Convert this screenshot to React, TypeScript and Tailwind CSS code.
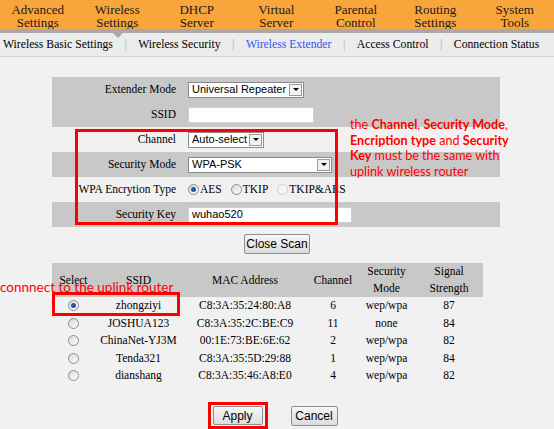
import React from "react";

const serif = "font-['Liberation_Serif','Times_New_Roman',serif]";
const sans = "font-['Liberation_Sans',Arial,sans-serif]";

function Arrow() {
  return (
    <div className="w-[13px] h-[12px] mr-[1px] border border-[#9a9a9a] bg-[#f2f2f2] flex items-center justify-center">
      <div className="w-0 h-0 border-l-[3px] border-r-[3px] border-t-[3px] border-l-transparent border-r-transparent border-t-black" />
    </div>
  );
}

function Select({ w, text }: { w: string; text: string }) {
  return (
    <div className={`${w} h-[16px] bg-white border border-[#8a8a8a] flex items-center justify-between`}>
      <span className={`${sans} text-[11px] pl-[3px] leading-none text-black whitespace-nowrap`}>{text}</span>
      <Arrow />
    </div>
  );
}

function Radio({ checked, faded }: { checked?: boolean; faded?: boolean }) {
  return (
    <span
      className={`inline-flex items-center justify-center w-[11px] h-[11px] rounded-full border ${
        faded ? "border-[#cfcfcf] bg-[#f4f4f4]" : "border-[#8c8c8c] bg-gradient-to-br from-[#d8d8d8] to-[#ffffff]"
      }`}
    >
      {checked && <span className="w-[5px] h-[5px] rounded-full bg-[#2457a8]" />}
    </span>
  );
}

function Row({ gray, label, children }: { gray?: boolean; label: string; children: React.ReactNode }) {
  return (
    <div className={`flex items-center h-[25px] ${gray ? "bg-[#c8c8c8]" : ""}`}>
      <div className={`w-[124px] text-right whitespace-nowrap ${serif} text-[11.5px] text-black`}>{label}</div>
      <div className="pl-[12px] flex items-center">{children}</div>
    </div>
  );
}

const nav = [
  ["Advanced", "Settings"],
  ["Wireless", "Settings"],
  ["DHCP", "Server"],
  ["Virtual", "Server"],
  ["Parental", "Control"],
  ["Routing", "Settings"],
  ["System", "Tools"],
];

const sub = ["Wireless Basic Settings", "Wireless Security", "Wireless Extender", "Access Control", "Connection Status"];

const nets = [
  ["zhongziyi", "C8:3A:35:24:80:A8", "6", "wep/wpa", "87", true],
  ["JOSHUA123", "C8:3A:35:2C:BE:C9", "11", "none", "84", false],
  ["ChinaNet-YJ3M", "00:1E:73:BE:6E:62", "2", "wep/wpa", "82", false],
  ["Tenda321", "C8:3A:35:5D:29:88", "1", "wep/wpa", "84", false],
  ["dianshang", "C8:3A:35:46:A8:E0", "4", "wep/wpa", "82", false],
] as const;

const btn = `${sans} text-[12px] text-black bg-gradient-to-b from-[#f7f7f7] to-[#dcdcdc] border border-[#8e8e8e] rounded-[2px] flex items-center justify-center`;

export default function App() {
  return (
    <div className="relative w-[554px] h-[429px] overflow-hidden bg-[#f1f1f1]">
      {/* top nav */}
      <div className="flex h-[29px] bg-[#f8a53c] -ml-[2px]">
        {nav.map(([a, b]) => (
          <div key={a} className={`w-[79.5px] shrink-0 text-center ${serif} text-[13px] leading-[13px] pt-[3px] text-[#1a1a1a]`}>
            <div>{a}</div>
            <div>{b}</div>
          </div>
        ))}
      </div>
      <div className="relative h-[4px] bg-[#a9a9a9]">
        <div className="absolute left-[113px] top-[4px] w-0 h-0 border-l-[5px] border-r-[5px] border-t-[5px] border-l-transparent border-r-transparent border-t-[#a9a9a9]" />
      </div>
      {/* sub nav */}
      <div className={`flex items-center h-[24px] bg-[#ececec] border-b border-[#d4d4d4] pl-[3px] ${serif} text-[11.7px] text-black`}>
        {sub.map((s, i) => (
          <React.Fragment key={s}>
            {i > 0 && <span className="mx-[11.5px] text-[#b0b0b0]">|</span>}
            <span className={s === "Wireless Extender" ? "text-[#3357ee]" : ""}>{s}</span>
          </React.Fragment>
        ))}
      </div>

      {/* form */}
      <div className="ml-[52px] mt-[20px] w-[448px]">
        <Row gray label="Extender Mode">
          <Select w="w-[116px]" text="Universal Repeater" />
        </Row>
        <Row gray label="SSID">
          <div className="w-[126px] h-[16px] bg-white border border-[#d0d0d0]" />
        </Row>
        <Row label="Channel">
          <Select w="w-[76px]" text="Auto-select" />
        </Row>
        <Row gray label="Security Mode">
          <Select w="w-[144px]" text="WPA-PSK" />
        </Row>
        <Row label="WPA Encrytion Type">
          <div className={`flex items-center ${serif} text-[11.5px] text-black whitespace-nowrap`}>
            <Radio checked />
            <span className="ml-[1px]">AES</span>
            <span className="ml-[9px] flex items-center"><Radio /></span>
            <span className="ml-[1px]">TKIP</span>
            <span className="ml-[9px] flex items-center"><Radio faded /></span>
            <span className="ml-[1px]">TKIP&amp;AES</span>
          </div>
        </Row>
        <Row gray label="Security Key">
          <div className="w-[164px] h-[16px] bg-white border border-[#d0d0d0] flex items-center">
            <span className={`${sans} text-[11px] pl-[3px] leading-none text-black`}>wuhao520</span>
          </div>
        </Row>
      </div>

      <div className="flex justify-center mt-[7px]">
        <div className={`${btn} w-[66px] h-[20px] text-[11.5px]`}>Close Scan</div>
      </div>

      {/* scan table */}
      <div className={`ml-[52px] mt-[9px] w-[431px] ${serif} text-[11.5px] text-black`}>
        <div className="grid grid-cols-[43px_87px_126px_50px_57px_68px] h-[34px] bg-[#c8c8c8] items-center text-center leading-[17px]">
          <div>Select</div>
          <div>SSID</div>
          <div>MAC Address</div>
          <div>Channel</div>
          <div>Security<br />Mode</div>
          <div>Signal<br />Strength</div>
        </div>
        {nets.map(([ssid, mac, ch, sec, sig, sel]) => (
          <div key={ssid} className="grid grid-cols-[43px_87px_126px_50px_57px_68px] h-[17.5px] items-center text-center leading-none">
            <div className="flex justify-center"><Radio checked={sel} /></div>
            <div>{ssid}</div>
            <div>{mac}</div>
            <div>{ch}</div>
            <div>{sec}</div>
            <div>{sig}</div>
          </div>
        ))}
      </div>

      {/* apply / cancel */}
      <div className="flex justify-center items-start mt-[17.5px] pr-[9px]">
        <div className="border-[3px] border-[#ff0000] px-[2px] py-[1px]">
          <div className={`${btn} w-[50px] h-[19px]`}>Apply</div>
        </div>
        <div className={`${btn} w-[47px] h-[20px] ml-[23px] mt-[4px]`}>Cancel</div>
      </div>

      {/* annotations */}
      <div className="absolute left-[75px] top-[129px] w-[263px] h-[96px] border-[3px] border-[#ff0000]" />
      <div className="absolute left-[350px] top-[117px] font-['Lato','Noto_Sans',sans-serif] text-[12.6px] leading-[15.5px] text-[#ff0000] whitespace-nowrap">
        <div>the <b>Channel</b>, <b>Security Mode</b>,</div>
        <div><b>Encription type</b> and <b>Security</b></div>
        <div><b>Key</b> must be the same with</div>
        <div>uplink wireless router</div>
      </div>
      <div className="absolute left-[52px] top-[292px] w-[128px] h-[24px] border-[3px] border-[#ff0000]" />
      <div className="absolute left-[0px] top-[278px] font-['Lato','Noto_Sans',sans-serif] text-[13.5px] leading-[18px] text-[#ff0000] whitespace-nowrap">
        connnect to the uplink router
      </div>
    </div>
  );
}
